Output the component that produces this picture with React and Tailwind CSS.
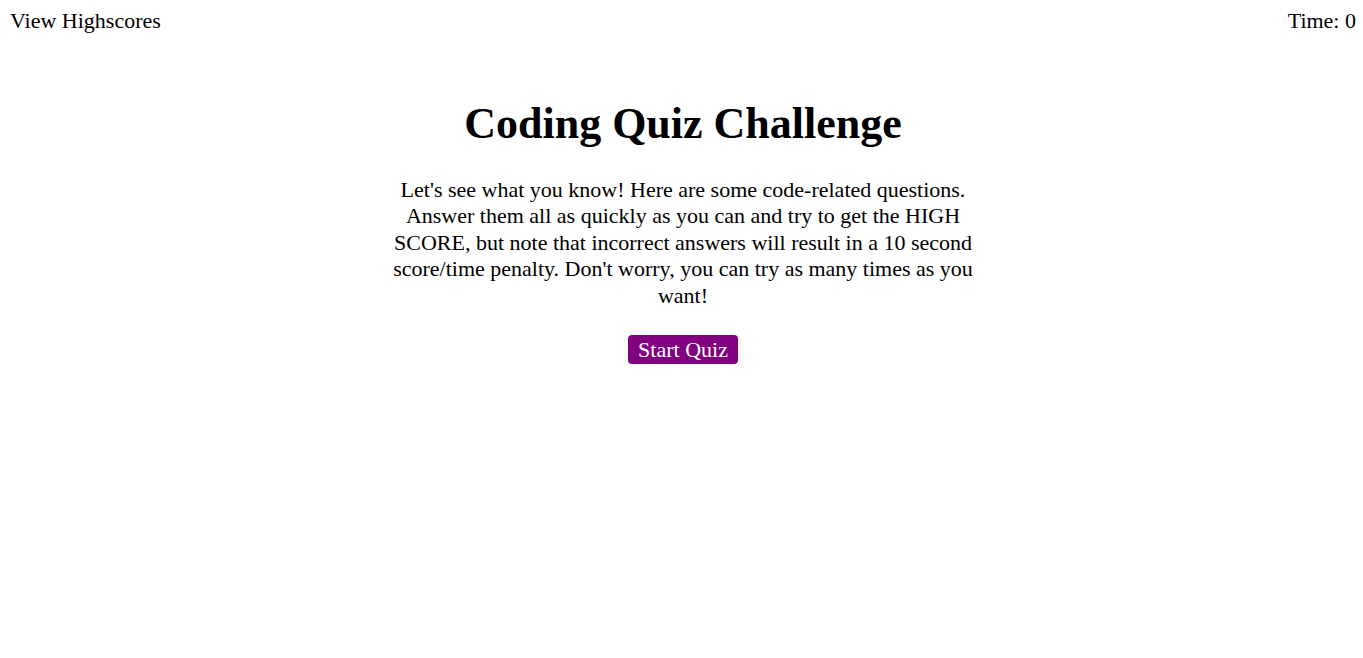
export default function App() {
  return (
    <div className="min-h-screen bg-white text-black font-['Liberation_Serif',serif]">
      <header className="flex justify-between items-center pl-[10px] pr-[7px] pt-[8px] text-[22px] leading-[25px]">
        <a href="#" className="text-black">View Highscores</a>
        <span>Time: 0</span>
      </header>

      <main className="flex flex-col items-center mt-[66px] pl-[3px]">
        <h1 className="text-[44px] font-bold leading-[50px]">Coding Quiz Challenge</h1>
        <p className="w-[600px] text-center text-[22px] leading-[26.4px] mt-[28px]">
          Let's see what you know! Here are some code-related questions. Answer them all as quickly as you can and try to get the HIGH SCORE, but note that incorrect answers will result in a 10 second score/time penalty. Don't worry, you can try as many times as you want!
        </p>
        <button className="mt-[26px] bg-[#800080] text-white text-[22px] leading-[25px] px-[10.5px] py-[2px] rounded-[4px]">
          Start Quiz
        </button>
      </main>
    </div>
  );
}
